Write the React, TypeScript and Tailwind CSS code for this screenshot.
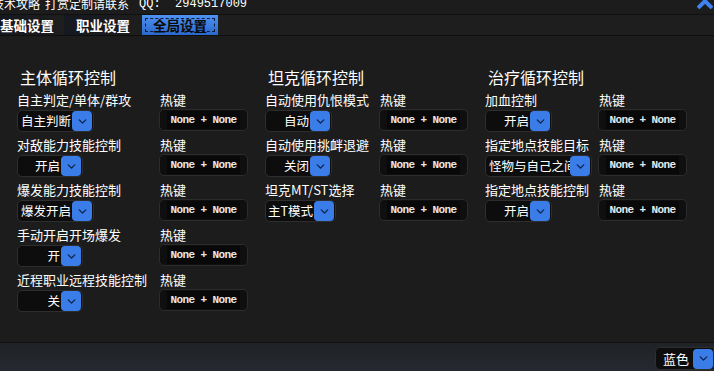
import { ChevronDown } from 'lucide-react';

const cjk = "font-['Noto_Sans_CJK_SC','Noto_Sans',sans-serif]";

interface Row {
    label: string;
    value: string;
    width: string;
    align?: 'right' | 'left';
}

interface Section {
    title: string;
    rows: Row[];
    labelWidth: string;
}

const sections: Section[] = [
    {
        title: '主体循环控制',
        labelWidth: 'w-[142px]',
        rows: [
            { label: '自主判定/单体/群攻', value: '自主判断', width: 'w-[77px]' },
            { label: '对敌能力技能控制', value: '开启', width: 'w-[66px]' },
            { label: '爆发能力技能控制', value: '爆发开启', width: 'w-[77px]' },
            { label: '手动开启开场爆发', value: '开', width: 'w-[66px]' },
            { label: '近程职业远程技能控制', value: '关', width: 'w-[66px]' },
        ],
    },
    {
        title: '坦克循环控制',
        labelWidth: 'w-[114px]',
        rows: [
            { label: '自动使用仇恨模式', value: '自动', width: 'w-[67px]' },
            { label: '自动使用挑衅退避', value: '关闭', width: 'w-[67px]' },
            { label: '坦克MT/ST选择', value: '主T模式', width: 'w-[71px]' },
        ],
    },
    {
        title: '治疗循环控制',
        labelWidth: 'w-[113px]',
        rows: [
            { label: '加血控制', value: '开启', width: 'w-[67px]' },
            { label: '指定地点技能目标', value: '怪物与自己之间', width: 'w-[107px]', align: 'left' },
            { label: '指定地点技能控制', value: '开启', width: 'w-[67px]' },
        ],
    },
];

function Combo({ value, width, align }: { value: string; width: string; align?: 'right' | 'left' }) {
    return (
        <div className={`${width} h-[22px] flex items-center rounded-[5px] border border-[#2e2e2e] bg-[#0d0d0d] pl-[2px] pr-[1px]`}>
            <span className={`flex-1 overflow-hidden whitespace-nowrap text-[12.5px] leading-none text-white ${align === 'left' ? 'text-left pl-[1px]' : 'text-right pr-[1px]'}`}>
                {value}
            </span>
            <span className="w-[20px] h-[20px] shrink-0 rounded-[4px] bg-[#3a7de8] flex items-center justify-center">
                <ChevronDown size={13} strokeWidth={2.5} className="text-[#10244a]" />
            </span>
        </div>
    );
}

function HotKey() {
    return (
        <div className="w-[89px] h-[22px] rounded-[5px] border border-[#2c2c2c] bg-[#0f0f0f] flex items-center px-[7px]">
            <div className="flex-1 h-[18px] bg-[#080808] flex items-center justify-center font-['Liberation_Mono',monospace] text-[11px] font-bold tracking-[-0.6px] text-[#e8e8e8] whitespace-nowrap">
                None + None
            </div>
        </div>
    );
}

export default function App() {
    return (
        <div className={`w-[714px] h-[371px] bg-[#1c1c1c] flex flex-col overflow-hidden ${cjk}`}>
            {/* title bar */}
            <div className="h-[15px] flex items-start justify-between border-b border-[#101010] overflow-hidden">
                <div className="ml-[-8px] mt-[-4px] flex items-center text-[12px] leading-[16px] text-white whitespace-nowrap">
                    <span>技术攻略</span>
                    <span className="ml-[5px]">打赏定制请联系</span>
                    <span className="ml-[10px] font-['Liberation_Mono',monospace] whitespace-pre">QQ:  2949517009</span>
                </div>
                <svg width="16" height="9" viewBox="0 0 16 9" className="mr-[1px]">
                    <path d="M1 8 L8 1 L15 8" stroke="#3f82ee" strokeWidth="4" fill="none" />
                </svg>
            </div>

            {/* tabs */}
            <div className="h-[21px] flex items-stretch border-b border-[#0e0e0e] bg-[#1e1e1e]">
                <div className="w-[64px] flex items-center bg-gradient-to-r from-[#161820] to-[#1e1e1e] text-[13.5px] font-bold text-white whitespace-nowrap">
                    基础设置
                </div>
                <div className="w-[78px] flex items-center pl-[12px] bg-gradient-to-r from-[#161820] to-[#1e1e1e] text-[13.5px] font-bold text-white whitespace-nowrap">
                    职业设置
                </div>
                <div className="w-[76px] p-[3px] bg-gradient-to-b from-[#4e92f2] to-[#2a68cc]">
                    <div className="h-full border border-dashed border-[#0c1c3a] flex items-center justify-center text-[13.5px] font-bold text-[#0a0a0a] whitespace-nowrap">
                        全局设置
                    </div>
                </div>
            </div>

            {/* content */}
            <div className="flex-1 flex pl-[17px] pt-[29px]">
                {sections.map((section, i) => (
                    <div key={section.title} className={i === 0 ? 'w-[248px]' : 'w-[220px]'}>
                        <div className="pl-[3px] h-[25px] text-[16px] leading-[25px] text-white whitespace-nowrap">{section.title}</div>
                        <div className="flex flex-col">
                            {section.rows.map((row) => (
                                <div key={row.label} className="flex h-[45px]">
                                    <div className={`${section.labelWidth} shrink-0 flex flex-col`}>
                                        <div className="h-[20px] text-[13px] leading-[20px] text-white whitespace-nowrap">{row.label}</div>
                                        <Combo value={row.value} width={row.width} align={row.align} />
                                    </div>
                                    <div className="flex flex-col">
                                        <div className="h-[19px] pl-[1px] text-[13px] leading-[19px] text-white whitespace-nowrap">热键</div>
                                        <HotKey />
                                    </div>
                                </div>
                            ))}
                        </div>
                    </div>
                ))}
            </div>

            {/* footer */}
            <div className="h-[29px] border-t border-[#111] bg-gradient-to-b from-[#1f2226] to-[#262a30] flex items-end justify-end pb-[1px]">
                <div className="w-[59px] h-[23px] flex items-center rounded-l-[5px] border border-[#2e2e2e] bg-[#0d0d0d] pl-[7px]">
                    <span className="flex-1 text-[13px] leading-none text-white whitespace-nowrap">蓝色</span>
                    <span className="w-[20px] h-[20px] shrink-0 rounded-[4px] bg-[#3a7de8] flex items-center justify-center">
                        <ChevronDown size={13} strokeWidth={2.5} className="text-[#10244a]" />
                    </span>
                </div>
            </div>
        </div>
    );
}
